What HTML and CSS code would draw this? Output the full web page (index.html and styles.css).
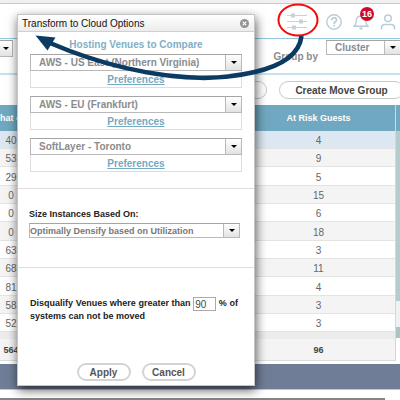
FILE: index.html
```html
<!DOCTYPE html>
<html lang="en">
<head>
<meta charset="utf-8">
<title>Transform to Cloud Options</title>
<link rel="stylesheet" href="styles.css">
</head>
<body>
<div class="page">
  <div class="strip"></div>
  <header class="topbar">
    <button class="icon" aria-label="Options">
      <svg width="20" height="18" viewBox="0 0 20 18" fill="#c3d3dd"><path d="M0 2h20v1H0zM0 8h20v1H0zM0 14h20v1H0z"/><path d="M4 0.500h4v4H4zM12 6.500h4v4h-4zM5 12.500h4v4H5z"/></svg>
    </button>
    <button class="icon" aria-label="Help">
      <svg width="16" height="16" viewBox="0 0 16 16" fill="none" stroke="#b9cdd9" stroke-width="1.400"><circle cx="8" cy="8" r="7.200"/><path d="M5.600 6.200c0-3.300 5-3.200 5-.3 0 1.900-2.500 1.900-2.500 4M8.100 11v1.600" stroke-width="1.700"/></svg>
    </button>
    <button class="icon bell" aria-label="Notifications">
      <svg width="16" height="16" viewBox="0 0 16 16" fill="none" stroke="#b9cdd9" stroke-width="1.400"><path d="M1 12.300c2.500-1.600 2-4 2.400-6.500C3.800 3.200 5.500 2 8 2s4.200 1.200 4.600 3.800c.4 2.500-.1 4.900 2.400 6.500z"/><path d="M6.500 14.500h3" stroke-width="2"/></svg>
      <span class="badge">16</span>
    </button>
    <button class="icon" aria-label="Account">
      <svg width="16" height="16" viewBox="0 0 16 16" fill="none" stroke="#b9cdd9" stroke-width="1.500"><circle cx="8" cy="4.300" r="3.300"/><path d="M1.500 15.500v-1.700c0-2 1-3.300 3-3.300h7c2 0 3 1.300 3 3.300v1.700"/></svg>
    </button>
  </header>
  <div class="filters">
    <span class="combo combo-first"><select aria-label="View"><option></option></select></span>
    <label class="group-label" for="group">Group by</label>
    <span class="combo combo-group"><select id="group"><option>Cluster</option></select></span>
  </div>
  <div class="actions">
    <button class="pill pill-blank" aria-label="Action"></button>
    <button class="pill pill-create">Create Move Group</button>
  </div>
  <div class="grid">
    <div class="grid-view">
      <table>
        <colgroup><col class="c-first"><col><col class="c-risk"></colgroup>
        <thead><tr><th class="th-first">hat c</th><th></th><th>At Risk Guests</th></tr></thead>
        <tbody>
          <tr class="selected"><td>40</td><td></td><td>4</td></tr>
          <tr><td>53</td><td></td><td>9</td></tr>
          <tr><td>29</td><td></td><td>5</td></tr>
          <tr><td>0</td><td></td><td>15</td></tr>
          <tr><td>0</td><td></td><td>6</td></tr>
          <tr><td>0</td><td></td><td>18</td></tr>
          <tr><td>63</td><td></td><td>3</td></tr>
          <tr><td>68</td><td></td><td>11</td></tr>
          <tr><td>81</td><td></td><td>4</td></tr>
          <tr><td>58</td><td></td><td>3</td></tr>
          <tr><td>52</td><td></td><td>3</td></tr>
        </tbody>
        <tfoot><tr><td>564</td><td></td><td>96</td></tr></tfoot>
      </table>
    </div>
    <div class="scroll"><div class="scroll-head"></div><div class="scroll-track"></div><div class="scroll-gap"></div><div class="scroll-end"></div></div>
  </div>
  <div class="footer"></div>
  <div class="bottom"></div>
</div>

<section class="dialog" role="dialog" aria-labelledby="dlg-title">
  <div class="dialog-head">
    <h1 id="dlg-title">Transform to Cloud Options</h1>
    <button class="close" aria-label="Close"><svg width="9" height="9" viewBox="0 0 9 9"><circle cx="4.500" cy="4.500" r="4.500" fill="#929292"/><path d="M2.700 2.700l3.600 3.600M6.300 2.700L2.700 6.300" stroke="#fff" stroke-width="1.200"/></svg></button>
  </div>
  <div class="venues">
    <h2>Hosting Venues to Compare</h2>
    <div class="venue"><span class="combo"><select aria-label="Venue 1"><option>AWS - US East (Northern Virginia)</option></select></span><a href="#">Preferences</a></div>
    <div class="venue"><span class="combo"><select aria-label="Venue 2"><option>AWS - EU (Frankfurt)</option></select></span><a href="#">Preferences</a></div>
    <div class="venue"><span class="combo"><select aria-label="Venue 3"><option>SoftLayer - Toronto</option></select></span><a href="#">Preferences</a></div>
  </div>
  <div class="sizing">
    <label for="size">Size Instances Based On:</label>
    <span class="combo combo-size"><select id="size"><option>Optimally Densify based on Utilization</option></select></span>
  </div>
  <label class="limit" for="pct">Disqualify Venues where greater than <input id="pct" type="text" value="90"> % of systems can not be moved</label>
  <div class="buttons"><button class="pill">Apply</button><button class="pill">Cancel</button></div>
</section>

<svg class="callout" width="320" height="90" viewBox="0 0 320 90" fill="none">
  <ellipse cx="298" cy="20" rx="19.500" ry="15.500" stroke="#f50a0a" stroke-width="2"/>
  <path d="M301.500 36C297 77 212 78 200 77.800C143 76 92 61 50 43" stroke="#0b3a62" stroke-width="4.600"/>
  <path d="M35.500 35.500L55.500 37.500L47.500 50.500Z" fill="#0b3a62"/>
</svg>
</body>
</html>
```
FILE: styles.css
```css
* { box-sizing: border-box; }
body { margin: 0; overflow-x: hidden; background: #fff; font-family: "Liberation Sans", Arial, sans-serif; font-size: 10px; color: #666; }
button, select, input { font-family: inherit; margin: 0; }
.page { overflow: hidden; }
.strip { height: 4px; background: #efefef; border-bottom: 1px solid #cbcbcb; }
.topbar { display: flex; justify-content: flex-end; align-items: center; gap: 11px; height: 35px; padding: 2px 4px 0 0; border-bottom: 1px solid #93c9da; }
.icon { display: flex; padding: 0; border: 0; background: none; }
.icon:first-child { margin-right: 8px; }
.bell { position: relative; }
.badge { position: absolute; left: 7px; top: -7px; width: 14px; height: 14px; border-radius: 50%; background: #cd0a27; color: #fff; font-size: 9px; font-weight: bold; line-height: 14px; text-align: center; }

.combo { display: grid; grid-template-columns: 1fr 16px; height: 17px; border: 1px solid #b9b9b9; border-top-color: #a5a5a5; background: #fff; }
.combo select { grid-area: 1 / 1 / 2 / 3; min-width: 0; width: 100%; height: 100%; padding: 0 0 0 8px; border: 0; border-radius: 0; appearance: none; background: transparent; color: #8c8c8c; font-size: 10px; font-weight: bold; }
.combo::after { content: ""; grid-area: 1 / 2; border-left: 1px solid #b9b9b9; background: url("data:image/svg+xml,%3Csvg xmlns='http://www.w3.org/2000/svg' width='6' height='3'%3E%3Cpath d='M0 0h6L3 3z' fill='%23000'/%3E%3C/svg%3E") center no-repeat, linear-gradient(#fff, #e2e2e2); pointer-events: none; z-index: 1; }
.filters { display: flex; align-items: flex-start; height: 36px; padding-top: 1px; border-bottom: 2px solid #c5e3ec; }
.combo-first { width: 13px; grid-template-columns: 0 1fr; border-left: 0; }
.combo-first::after { border-left: 0; }
.group-label { margin: 10px 8px 0 auto; color: #8c8c8c; font-weight: bold; line-height: 14px; }
.combo-group { flex: none; width: 75px; height: 15px; margin-right: -1px; }

.pill { height: 18px; padding: 0; border: 1px solid #c9c9c9; border-radius: 9px; background: #fff; color: #444; font-size: 10px; font-weight: bold; }
.actions { display: flex; justify-content: flex-end; gap: 12px; height: 30px; padding-top: 6px; }
.pill-blank { width: 90px; }
.pill-create { flex: none; width: 125px; margin-right: -4px; }

.grid { display: flex; }
.grid-view { flex: 1; overflow: hidden; }
table { width: calc(100% + 40px); margin-left: -40px; border-collapse: separate; border-spacing: 0; table-layout: fixed; }
.c-first { width: 102px; }
.c-risk { width: 153px; }
th { height: 26px; padding: 0; background: #6fa8c0; color: #fff; font-size: 9px; }
.th-first { padding-left: 40px; text-align: left; }
tbody td { height: 18px; padding: 2px 0 0; border-bottom: 1px solid #e4e4e4; text-align: center; font-size: 10px; line-height: 15px; }
tbody tr:nth-child(3n) td { height: 19px; }
tbody tr:nth-child(even) td { background: #f4f4f4; }
tbody .selected td { background: #dce7f2; }
tfoot td { height: 29px; padding: 0; border-top: 7px solid #ececec; border-bottom: 1px solid #ddd; background: #f4f4f4; text-align: center; color: #444; font-size: 9px; font-weight: bold; }
.scroll { display: flex; flex-direction: column; width: 5px; border-left: 1px solid #cfd9dc; }
.scroll-head { height: 26px; background: #6fa8c0; }
.scroll-track { height: 170px; background: #b4cccb; }
.scroll-gap { height: 26px; background: #eff2f2; }
.scroll-end { height: 11px; background: #a9c4c3; }
.footer { height: 26px; margin-top: 3px; background: #6f7e96; border-bottom: 1px solid #c8c8c8; }
.bottom { height: 10px; margin-right: 15px; border-bottom: 2px solid #858585; }

.dialog { position: absolute; left: 17px; top: 14px; width: 238px; border: 1px solid #c6c6c6; background: #fff; box-shadow: 1px 4px 10px rgba(0, 0, 0, .65); color: #222; font-size: 9px; font-weight: bold; }
.dialog-head { display: flex; justify-content: space-between; align-items: center; height: 17px; padding: 0 5px 0 4px; border-bottom: 1px solid #cfcfcf; background: linear-gradient(#fff, #ececec); }
h1 { margin: 0; font-size: 10px; font-weight: normal; color: #111; }
.close { display: flex; padding: 0; border: 0; background: none; }
.venues { display: flex; flex-direction: column; height: 157px; padding: 6px 12px 0; border-bottom: 1px solid #dedede; }
h2 { margin: 0 0 2px; color: #7fb0c5; font-size: 10px; line-height: 14px; text-align: center; }
.venue { height: 34px; margin-bottom: 8px; border: 1px solid #dedede; border-top: 0; }
.venue .combo { margin: 0 -1px; }
.venue a { display: block; color: #74a9bf; font-size: 10px; line-height: 18px; text-align: center; }
.sizing { height: 79px; padding: 19px 14px 0 11px; border-bottom: 1px solid #dedede; }
.sizing label { display: block; height: 15px; line-height: 12px; }
.combo-size { height: 15px; }
.combo-size select { padding-left: 0; color: #777; font-size: 9px; }
.limit { display: block; padding: 29px 16px 0 12px; line-height: 11px; text-align: justify; }
.limit input { width: 23px; height: 14px; padding: 0 1px; border: 1px solid #aaa; color: #444; font-size: 10px; vertical-align: middle; }
.buttons { display: flex; justify-content: center; gap: 11px; padding: 41px 0 4px; }
.buttons .pill { width: 54px; border-width: 2px; border-color: #d4d4d4; color: #555; }
.callout { position: absolute; left: 0; top: 0; pointer-events: none; }
```
